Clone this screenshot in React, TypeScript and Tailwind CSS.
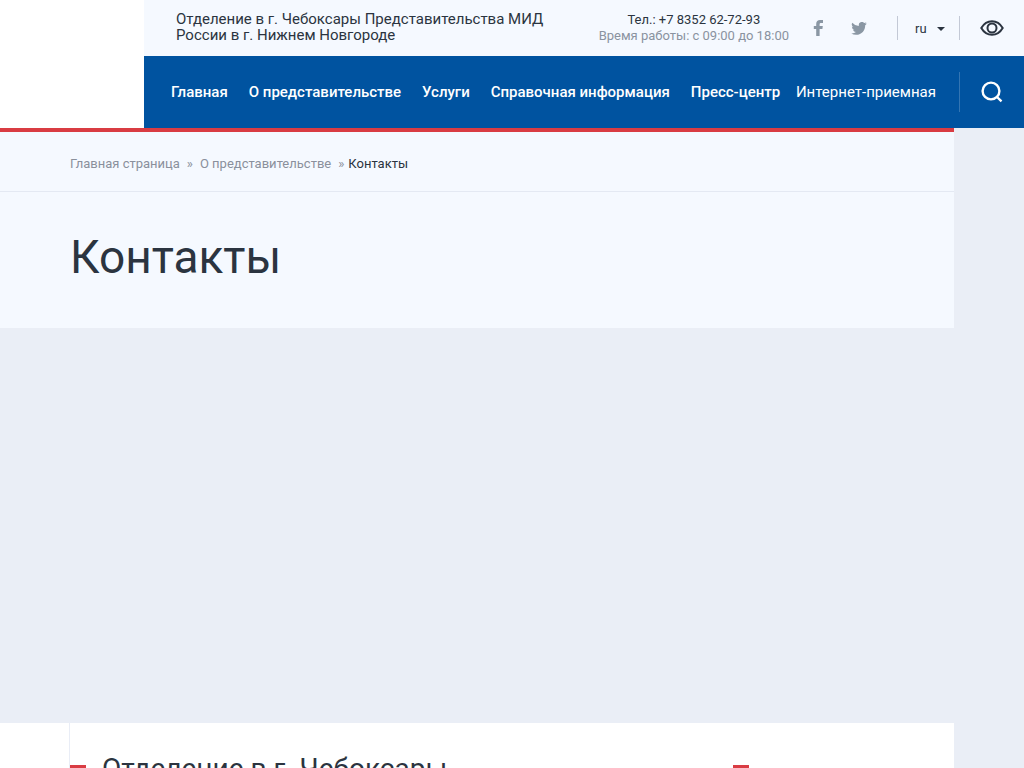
import React from 'react';

const navItems = ['Главная', 'О представительстве', 'Услуги', 'Справочная информация', 'Пресс-центр'];

const App = () => {
  return (
    <div className="min-h-screen bg-[#eaeef6] font-['Roboto',sans-serif] text-[#2b3440]">
      <Header />
      <main className="mr-[70px]">
        <PageTitle />
        <section aria-label="Карта" className="h-[395px]" />
        <Departments />
      </main>
    </div>
  );
};

const Header = () => (
  <header className="flex h-32">
    <div className="w-36 shrink-0 bg-white" />
    <div className="flex min-w-0 grow flex-col">
      <TopBar />
      <MainNav />
    </div>
  </header>
);

const TopBar = () => (
  <div className="flex h-14 items-center bg-[#f5f9ff] pl-8 text-[13px] leading-4">
    <a href="#" className="mb-[2px] max-w-[400px] text-[15px]">
      Отделение в г. Чебоксары Представительства МИД
      <br />
      России в г. Нижнем Новгороде
    </a>
    <div className="ml-auto mr-6 whitespace-nowrap text-center">
      <div>Тел.: +7 8352 62-72-93</div>
      <div className="text-[#8a939f]">Время работы: с 09:00 до 18:00</div>
    </div>
    <div className="mr-[30px] flex items-center gap-[27px] text-[#8a97a4]">
      <a href="#" aria-label="Facebook">
        <svg width="11" height="16" viewBox="0 0 11 16" fill="currentColor">
          <path d="M3.2 16V9H.8V6h2.4V4.1C3.2 1.5 4.7 0 7 0h3v2.900H8.200C7.100 2.900 6.600 3.400 6.600 4.300V6h3.200l-.4 3H6.600v7z" />
        </svg>
      </a>
      <a href="#" aria-label="Twitter">
        <svg width="16" height="13" viewBox="0 0 24 20" fill="currentColor">
          <path d="M24 2.400a9.800 9.800 0 0 1-2.800.8A4.900 4.900 0 0 0 23.300.400a9.900 9.900 0 0 1-3.100 1.200 4.900 4.900 0 0 0-8.400 4.500A14 14 0 0 1 1.700 1a4.900 4.900 0 0 0 1.500 6.600 4.900 4.900 0 0 1-2.200-.6v.1a4.900 4.900 0 0 0 3.900 4.800 5 5 0 0 1-2.200.1 4.900 4.900 0 0 0 4.600 3.400A9.900 9.900 0 0 1 0 17.500a13.900 13.900 0 0 0 7.500 2.200c9.100 0 14-7.500 14-14v-.6A10 10 0 0 0 24 2.400z" />
        </svg>
      </a>
    </div>
    <div className="relative h-6 w-[63px] shrink-0 border-x border-[#c3c9d6]">
      <select
        aria-label="Язык"
        defaultValue="ru"
        className="h-full w-full appearance-none bg-transparent pt-[2px] pl-[17px] text-[13px] leading-4"
      >
        <option value="ru">ru</option>
        <option value="en">en</option>
      </select>
      <svg className="pointer-events-none absolute top-[11px] right-[14px]" width="8" height="4" viewBox="0 0 8 4">
        <path d="M0 0h8L4 4z" fill="currentColor" />
      </svg>
    </div>
    <button type="button" aria-label="Версия для слабовидящих" className="flex w-16 shrink-0 justify-center">
      <svg width="24" height="16" viewBox="0 0 24 16" fill="none" stroke="currentColor" strokeWidth="2">
        <path d="M1.300 8C3.800 3.700 7.600 1.200 12 1.200S20.200 3.700 22.700 8C20.200 12.300 16.400 14.800 12 14.800S3.800 12.300 1.300 8z" />
        <circle cx="12" cy="8" r="4.500" />
      </svg>
    </button>
  </div>
);

const MainNav = () => (
  <div className="flex h-[72px] items-center bg-[#0053a0] text-white">
    <nav className="flex grow items-center justify-between whitespace-nowrap pl-[27px] pr-[23px] text-[15px] leading-5 font-medium">
      <div className="flex gap-[21px]">
        {navItems.map((item) => (
          <a key={item} href="#">{item}</a>
        ))}
      </div>
      <a href="#" className="font-normal">Интернет-приемная</a>
    </nav>
    <div className="flex h-10 w-[65px] shrink-0 border-l border-[#3375b3]">
      <button type="button" aria-label="Поиск" className="flex grow items-center justify-center">
        <svg width="22" height="22" viewBox="0 0 22 22" fill="none" stroke="currentColor" strokeWidth="2.400">
          <circle cx="10" cy="10" r="8.400" />
          <path d="M15.500 15.500l5 4.800" />
        </svg>
      </button>
    </div>
  </div>
);

const PageTitle = () => (
  <div className="border-t-4 border-[#d93c43] bg-[#f5f9ff]">
    <nav aria-label="Навигация" className="flex h-[60px] items-center border-b border-[#e4e9f3] pt-1 pl-[70px] text-[13px] leading-4 text-[#8a909c]">
      <a href="#">Главная страница</a>
      <span className="mx-[7px]">»</span>
      <a href="#">О представительстве</a>
      <span className="ml-[7px] mr-1">»</span>
      <span className="text-[#2b3440]">Контакты</span>
    </nav>
    <h1 className="pt-[35px] pb-[41px] pl-[70px] text-[46px] leading-[60px]">Контакты</h1>
  </div>
);

const Departments = () => (
  <section className="bg-white">
    <div className="ml-[69px] flex gap-4 border-l border-[#e9edf6] pt-[30px] pb-8">
      <div className="mt-3 h-1 w-4 shrink-0 bg-[#d93c43]" />
      <h2 className="grow text-[28px] leading-8">Отделение в г. Чебоксары</h2>
      <div className="mt-3 mr-[205px] h-1 w-4 shrink-0 bg-[#d93c43]" />
    </div>
  </section>
);

export default App;
